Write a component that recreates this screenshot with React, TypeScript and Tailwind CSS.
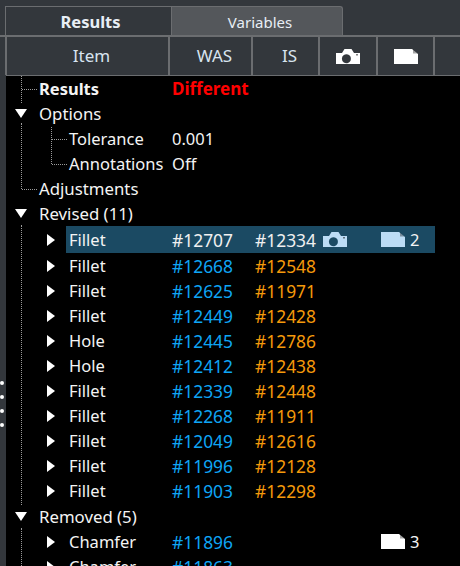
function Camera({ className }: { className: string }) {
  return (
    <svg viewBox="0 0 24 15" className={className} fill="currentColor">
      <path fillRule="evenodd" d="M0 4h6l2.5-4h7L18 4h6v11H0V4zm12 1.5a4.5 4.5 0 1 0 0 8.4 4.5 4.5 0 0 0 0-8.4z" />
      <rect x="20" y="5" width="2" height="1.5" fill="#000" opacity="0.5" />
    </svg>
  )
}

function Note({ className }: { className: string }) {
  return (
    <svg viewBox="0 0 24 15" className={className} fill="currentColor">
      <path d="M0 0h18l6 5v10H0V0z" />
      <path d="M19 .5l4.5 4H19z" fill="#000" opacity="0.35" />
    </svg>
  )
}

function Down() {
  return (
    <svg viewBox="0 0 12 9" className="h-[9px] w-[12px] text-white" fill="currentColor">
      <path d="M0 0h12L6 9z" />
    </svg>
  )
}

function Right() {
  return (
    <svg viewBox="0 0 8 12" className="h-[12px] w-[8px] text-white" fill="currentColor">
      <path d="M0 0l8 6-8 6z" />
    </svg>
  )
}

type Item = { name: string; was: string; is?: string; cam?: boolean; note?: number; selected?: boolean }

const revised: Item[] = [
  { name: 'Fillet', was: '#12707', is: '#12334', cam: true, note: 2, selected: true },
  { name: 'Fillet', was: '#12668', is: '#12548' },
  { name: 'Fillet', was: '#12625', is: '#11971' },
  { name: 'Fillet', was: '#12449', is: '#12428' },
  { name: 'Hole', was: '#12445', is: '#12786' },
  { name: 'Hole', was: '#12412', is: '#12438' },
  { name: 'Fillet', was: '#12339', is: '#12448' },
  { name: 'Fillet', was: '#12268', is: '#11911' },
  { name: 'Fillet', was: '#12049', is: '#12616' },
  { name: 'Fillet', was: '#11996', is: '#12128' },
  { name: 'Fillet', was: '#11903', is: '#12298' },
]

const removed: Item[] = [
  { name: 'Chamfer', was: '#11896', note: 3 },
  { name: 'Chamfer', was: '#11863' },
]

function ItemRow({ item, className = '' }: { item: Item; className?: string }) {
  return (
    <div className={`flex h-[25px] shrink-0 items-center ${className}`}>
      <div className="flex w-[66px] justify-end pr-[11px]">
        <Right />
      </div>
      <div className={`flex h-[27px] w-[369px] items-center pl-[3px] ${item.selected ? 'bg-[#1b4a63]' : ''}`}>
        <span className="w-[103px] text-[#f4f4f4]">{item.name}</span>
        <span className={`w-[83px] text-[17.4px] ${item.selected ? 'text-[#f0f0f0]' : 'text-[#0ea5f5]'}`}>{item.was}</span>
        <span className={`w-[68px] text-[17.4px] whitespace-nowrap ${item.selected ? 'text-[#f0f0f0]' : 'text-[#f59a0b]'}`}>{item.is}</span>
        <span className="w-[58px]">
          {item.cam && <Camera className="h-[15px] w-[24px] text-[#bcdcf5]" />}
        </span>
        <span className="w-[29px]">
          {item.note && <Note className={`h-[15px] w-[24px] ${item.selected ? 'text-[#bcdcf5]' : 'text-white'}`} />}
        </span>
        <span className="text-[#f4f4f4]">{item.note}</span>
      </div>
    </div>
  )
}

function Group({ label, children, className = '' }: { label: string; children?: React.ReactNode; className?: string }) {
  return (
    <div className={`flex h-[25px] shrink-0 items-center text-[16.8px] text-[#f4f4f4] ${className}`}>
      <div className="flex w-[33px] pl-[15px]">{children}</div>
      <span className="pl-[6px]">{label}</span>
    </div>
  )
}

function Prop({ label, value }: { label: string; value: string }) {
  return (
    <div className="flex h-[25px] shrink-0 items-center text-[#f4f4f4]">
      <span className="w-[172px] pl-[69px] whitespace-nowrap">{label}</span>
      <span>{value}</span>
    </div>
  )
}

export default function App() {
  return (
    <div
      className="relative flex h-[566px] w-[460px] flex-col overflow-hidden bg-[#33373c] pt-[6px] text-[16.5px] leading-[22px]"
      style={{ fontFamily: '"Noto Sans", sans-serif' }}
    >
      {/* tabs */}
      <div className="flex h-[31px] shrink-0 border-b-2 border-[#6b6d70] pl-[5px]">
        <div className="flex w-[167px] items-center justify-center border-x border-t border-[#6b6d70] pt-px pl-[4px] font-bold text-[#e8eef5]">Results</div>
        <div className="flex w-[171px] items-center justify-center rounded-tr-[3px] border-t border-r border-[#6b6d70] bg-[#54575b] pt-px pl-[6px] text-[15px] text-[#e8eef5]">Variables</div>
      </div>

      {/* header */}
      <div className="flex h-[38px] shrink-0 pl-[5px] text-[17px] text-[#d8e4f0]">
        <div className="flex w-[163px] items-center justify-center border-l-2 border-[#6b6d70] pl-[8px]">Item</div>
        <div className="flex w-[83px] items-center justify-center border-l-2 border-[#6b6d70] pl-[8px]">WAS</div>
        <div className="flex w-[67px] items-center justify-center border-l-2 border-[#6b6d70] pl-[8px]">IS</div>
        <div className="flex w-[58px] items-center justify-center border-l-2 border-[#6b6d70]">
          <Camera className="h-[15px] w-[24px] text-white" />
        </div>
        <div className="flex w-[59px] items-center justify-center border-x-2 border-[#6b6d70]">
          <Note className="h-[15px] w-[24px] text-white" />
        </div>
      </div>

      {/* tree */}
      <div className="relative ml-[6px] min-h-0 flex-1 overflow-hidden border-t border-[#6b6d70] bg-black">
        <div className="-ml-[6px]">
          <div className="flex h-[25px] items-center">
            <span className="w-[172px] pl-[39px] font-bold text-[#f4f4f4]">Results</span>
            <span className="text-[17px] font-bold text-[#ff0000]">Different</span>
          </div>
          <Group label="Options"><Down /></Group>
          <Prop label="Tolerance" value="0.001" />
          <Prop label="Annotations" value="Off" />
          <Group label="Adjustments" />
          <Group label="Revised (11)"><Down /></Group>
          {revised.map((item, i) => <ItemRow key={item.was} item={item} className={i < 2 ? 'mt-px' : ''} />)}
          <Group label="Removed (5)" className="mt-px"><Down /></Group>
          {removed.map((item) => <ItemRow key={item.was} item={item} />)}
        </div>

        {/* tree guide lines */}
        <div className="absolute top-0 left-[15px] h-[27px] border-l border-dotted border-[#9a9a9a]" />
        <div className="absolute top-[13px] left-[16px] w-[15px] border-t border-dotted border-[#9a9a9a]" />
        <div className="absolute top-[47px] left-[15px] h-[66px] border-l border-dotted border-[#9a9a9a]" />
        <div className="absolute top-[113px] left-[16px] w-[15px] border-t border-dotted border-[#9a9a9a]" />
        <div className="absolute top-[51px] left-[45px] h-[37px] border-l border-dotted border-[#9a9a9a]" />
        <div className="absolute top-[63px] left-[46px] w-[15px] border-t border-dotted border-[#9a9a9a]" />
        <div className="absolute top-[88px] left-[46px] w-[15px] border-t border-dotted border-[#9a9a9a]" />
        <div className="absolute top-[149px] left-[15px] h-[280px] border-l border-dotted border-[#9a9a9a]" />
        <div className="absolute top-[452px] left-[15px] h-[50px] border-l border-dotted border-[#9a9a9a]" />
      </div>

      {/* splitter grip */}
      <div className="absolute top-[381px] left-0 flex flex-col gap-[10px]">
        <span className="h-[4px] w-[4px] rounded-full bg-white" />
        <span className="h-[4px] w-[4px] rounded-full bg-white" />
        <span className="h-[4px] w-[4px] rounded-full bg-white" />
        <span className="h-[4px] w-[4px] rounded-full bg-white" />
      </div>
    </div>
  )
}
